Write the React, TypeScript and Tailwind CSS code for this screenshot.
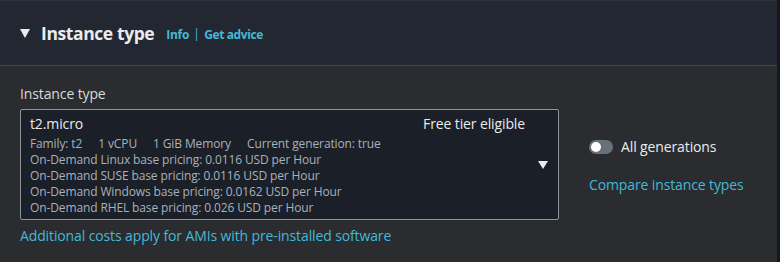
export default function App() {
  const specs = [
    "On-Demand Linux base pricing: 0.0116 USD per Hour",
    "On-Demand SUSE base pricing: 0.0116 USD per Hour",
    "On-Demand Windows base pricing: 0.0162 USD per Hour",
    "On-Demand RHEL base pricing: 0.026 USD per Hour",
  ];

  return (
    <div className="w-[780px] h-[262px] flex bg-[#15181d] overflow-hidden" style={{ fontFamily: '"Open Sans", "Noto Sans", sans-serif' }}>
      <div className="w-[777px] flex flex-col bg-[#2a2c30]">
        {/* Header */}
        <div className="h-[66px] bg-[#232731] border-t border-[#2e323a] border-b border-b-[#414750] flex items-center pl-[20px]">
          <svg width="10" height="9" viewBox="0 0 10 9" className="mr-[11px] mt-[1px]">
            <polygon points="0,0 10,0 5,9" fill="#e9ebed" />
          </svg>
          <h2 className="text-[17.5px] font-bold text-[#e9ebed] tracking-[-0.4px]">Instance type</h2>
          <span className="ml-[12px] mt-[3px] text-[12px] font-bold text-[#44b9d6] tracking-[-0.3px]">Info</span>
          <span className="mx-[4px] mt-[2px] text-[13px] text-[#44b9d6]">|</span>
          <span className="mt-[3px] text-[12px] font-bold text-[#44b9d6] tracking-[-0.4px]">Get advice</span>
        </div>

        {/* Body */}
        <div className="flex pl-[20px] pt-[18px] tracking-[-0.12px]">
          <div className="flex flex-col">
            <label className="text-[14px] leading-[20px] text-[#d5dbdb]">Instance type</label>
            <div className="mt-[5px] w-[539px] h-[111px] bg-[#1b1f27] border border-[#8c96a3] rounded-[2px] flex pl-[9px] pt-[4px] pr-[10px]">
              <div className="flex-1 flex flex-col">
                <div className="flex justify-between pr-[13px]">
                  <span className="text-[14px] leading-[20px] text-[#e9ebed]">t2.micro</span>
                  <span className="text-[14px] leading-[20px] text-[#e9ebed]">Free tier eligible</span>
                </div>
                <div className="mt-[2px] text-[12px] leading-[16px] text-[#a9b1bb] flex gap-[16px]">
                  <span>Family: t2</span>
                  <span>1 vCPU</span>
                  <span>1 GiB Memory</span>
                  <span>Current generation: true</span>
                </div>
                {specs.map((s) => (
                  <div key={s} className="text-[12px] leading-[16px] text-[#a9b1bb]">{s}</div>
                ))}
              </div>
              <div className="flex items-center">
                <svg width="10" height="8" viewBox="0 0 10 8" className="mt-[-4px]">
                  <polygon points="0,0 10,0 5,8" fill="#e9ebed" />
                </svg>
              </div>
            </div>
            <span className="mt-[6px] text-[14px] leading-[20px] text-[#44b9d6]">Additional costs apply for AMIs with pre-installed software</span>
          </div>

          <div className="ml-[30px] mt-[53px] flex flex-col">
            <div className="flex items-center gap-[8px]">
              <div className="w-[24px] h-[14px] rounded-full bg-[#687078] flex items-center pl-[2px]">
                <div className="w-[10px] h-[10px] rounded-full bg-white" />
              </div>
              <span className="text-[14px] leading-[20px] text-[#e9ebed]">All generations</span>
            </div>
            <span className="mt-[18px] text-[14px] leading-[20px] text-[#44b9d6]">Compare instance types</span>
          </div>
        </div>
      </div>
    </div>
  );
}
